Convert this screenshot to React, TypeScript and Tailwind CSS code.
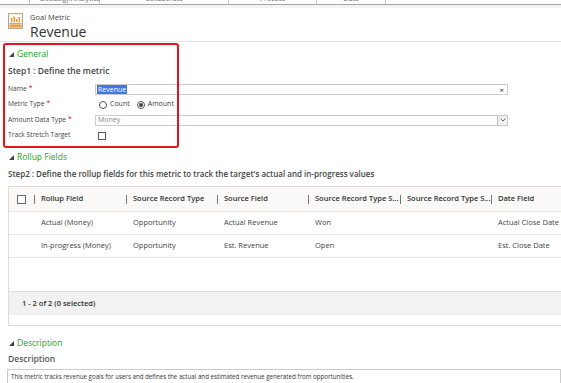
import React from "react";

const font = { fontFamily: '"Open Sans", "Noto Sans", sans-serif' };

function Tri() {
  return (
    <svg width="5" height="5" viewBox="0 0 5 5" className="mr-[3px]">
      <polygon points="5,0 5,5 0,5" fill="#444" />
    </svg>
  );
}

function SectionTitle({ children }: { children: React.ReactNode }) {
  return (
    <div className="flex items-center pl-[9px] text-[8.5px] text-[#21a621] leading-none">
      <Tri />
      <span>{children}</span>
    </div>
  );
}

function Req() {
  return <span className="text-[#e00] ml-[2px]">*</span>;
}

function GoalIcon() {
  return (
    <svg width="15" height="16" viewBox="0 0 15 16">
      <rect x="0.5" y="0.5" width="14" height="15" fill="#f6ecdc" stroke="#b9a58a" />
      <rect x="1.5" y="1.5" width="12" height="8" fill="#fffaf2" />
      <rect x="3" y="5" width="1.5" height="4" fill="#e39b4a" />
      <rect x="5.5" y="3.5" width="1.5" height="5.5" fill="#e39b4a" />
      <rect x="8" y="6" width="1.5" height="3" fill="#e39b4a" />
      <rect x="10.5" y="4" width="1.5" height="5" fill="#e39b4a" />
      <rect x="1.5" y="10" width="12" height="4.5" fill="#f0a04b" />
      <line x1="2" y1="11.5" x2="13" y2="11.5" stroke="#fff" strokeWidth="0.6" strokeDasharray="1 1" />
    </svg>
  );
}

const cols = [
  { w: 25, label: "" },
  { w: 92, label: "Rollup Field" },
  { w: 91, label: "Source Record Type" },
  { w: 91, label: "Source Field" },
  { w: 92, label: "Source Record Type S..." },
  { w: 91, label: "Source Record Type S..." },
  { w: 80, label: "Date Field" },
];

const rows = [
  ["Actual (Money)", "Opportunity", "Actual Revenue", "Won", "", "Actual Close Date"],
  ["In-progress (Money)", "Opportunity", "Est. Revenue", "Open", "", "Est. Close Date"],
];

export default function App() {
  return (
    <div style={font} className="relative w-[561px] h-[383px] overflow-hidden bg-white text-[#333]">
      {/* top nav strip (cut off) */}
      <div className="h-[4px] overflow-hidden flex text-[7px] text-[#666] leading-[8px]">
        <div className="w-[30px] border-r border-[#ccc]" />
        <div className="w-[38px] border-r border-[#ccc] pl-[10px] -mt-[5px]">DocuSign</div>
        <div className="w-[32px] border-r border-[#ccc] pl-[3px] -mt-[5px]">Analytics</div>
        <div className="w-[129px] border-r border-[#ccc] flex justify-center -mt-[5px]">Collaborate</div>
        <div className="w-[88px] border-r border-[#ccc] flex justify-center -mt-[5px]">Process</div>
        <div className="w-[69px] border-r border-[#ccc] flex justify-center -mt-[5px]">Data</div>
      </div>
      <div className="h-[1px] bg-[#a6a6a6]" />
      <div className="h-[3px] bg-[#f3f3f3]" />

      {/* header */}
      <div className="h-[34px] flex border-b border-[#e2e2e2] pl-[8px] pt-[5px]">
        <GoalIcon />
        <div className="ml-[7px] flex flex-col">
          <div className="text-[7.5px] leading-[9px] text-[#444]">Goal Metric</div>
          <div className="text-[14px] leading-[18px] text-[#333] mt-[1px]">Revenue</div>
        </div>
      </div>

      {/* General */}
      <div className="pt-[6px]">
        <div className="h-[12px] flex items-center">
          <SectionTitle>General</SectionTitle>
        </div>
        <div className="h-[22px] flex items-center pl-[8px] text-[8.5px] font-semibold text-[#444]">
          Step1 : Define the metric
        </div>
        <div className="flex flex-col pl-[8px] text-[6.7px] text-[#444]">
          <div className="h-[15px] flex items-center">
            <div className="w-[87px]">Name<Req /></div>
            <div className="w-[413px] h-[11px] border border-[#ccc] flex items-center pl-[1px] pr-[3px] justify-between text-[7px]">
              <span className="bg-[#3d7ae0] text-white px-[1px] leading-[9px]">Revenue</span>
              <span className="text-[8px] text-[#222] leading-none">×</span>
            </div>
          </div>
          <div className="h-[15px] flex items-center">
            <div className="w-[87px]">Metric Type<Req /></div>
            <div className="flex items-center pl-[4px] text-[7px]">
              <span className="w-[8px] h-[8px] rounded-full border border-[#555] bg-white" />
              <span className="ml-[3px]">Count</span>
              <span className="ml-[7px] w-[8px] h-[8px] rounded-full border border-[#555] bg-white flex items-center justify-center">
                <span className="w-[4px] h-[4px] rounded-full bg-[#444]" />
              </span>
              <span className="ml-[3px]">Amount</span>
            </div>
          </div>
          <div className="h-[16px] flex items-center">
            <div className="w-[87px]">Amount Data Type<Req /></div>
            <div className="w-[413px] h-[11px] border border-[#ccc] flex items-center justify-between pl-[2px] text-[7px]">
              <span className="text-[#888]">Money</span>
              <span className="w-[10px] h-[9px] border-l border-[#bbb] bg-[#f0f0f0] flex items-center justify-center">
                <svg width="6" height="4" viewBox="0 0 6 4"><polyline points="0.5,0.5 3,3 5.5,0.5" fill="none" stroke="#555" strokeWidth="0.9" /></svg>
              </span>
            </div>
          </div>
          <div className="h-[15px] flex items-center">
            <div className="w-[90px]">Track Stretch Target</div>
            <span className="w-[8px] h-[8px] border border-[#555] bg-white" />
          </div>
        </div>
      </div>

      {/* Rollup Fields */}
      <div className="mt-[8px] h-[12px] flex items-center">
        <SectionTitle>Rollup Fields</SectionTitle>
      </div>
      <div className="h-[21px] flex items-center pl-[8px] text-[8px] font-semibold text-[#444] whitespace-nowrap">
        Step2 : Define the rollup fields for this metric to track the target's actual and in-progress values
      </div>

      {/* table */}
      <div className="ml-[8px] mt-[2px] w-[570px] h-[140px] border border-[#dcdcdc] flex flex-col text-[7.5px] text-[#444]">
        <div className="h-[25px] bg-[#faf9f7] flex items-center border-b border-[#e6e6e6] font-semibold text-[#333]">
          {cols.map((c, i) => (
            <div key={i} style={{ width: c.w }} className="flex items-center h-full shrink-0 whitespace-nowrap">
              {i === 0 ? (
                <span className="ml-[8px] w-[9px] h-[9px] border border-[#666] bg-white" />
              ) : (
                <>
                  <span className="w-[1px] h-[9px] bg-[#777]" />
                  <span className="ml-[6px]">{c.label}</span>
                </>
              )}
            </div>
          ))}
        </div>
        {rows.map((r, ri) => (
          <div key={ri} className="h-[23px] flex items-center border-b border-[#e6e6e6]">
            <div style={{ width: 25 }} className="shrink-0" />
            {r.map((cell, ci) => (
              <div key={ci} style={{ width: cols[ci + 1].w }} className="shrink-0 pl-[7px] whitespace-nowrap">
                {cell}
              </div>
            ))}
          </div>
        ))}
        <div className="flex-1" />
        <div className="h-[24px] bg-[#f2f2f2] border-t border-[#dedede] flex items-center pl-[13px] font-semibold text-[#333]">
          1 - 2 of 2 (0 selected)
        </div>
        <div className="h-[10px]" />
      </div>

      {/* Description */}
      <div className="mt-[11px] h-[12px] flex items-center">
        <SectionTitle>Description</SectionTitle>
      </div>
      <div className="h-[20px] flex items-center pl-[8px] text-[8.5px] font-semibold text-[#555]">
        Description
      </div>
      <div className="ml-[7px] h-[20px] border border-[#ccc] text-[6.2px] text-[#333] pl-[3px] pt-[2px] whitespace-nowrap">
        This metric tracks revenue goals for users and defines the actual and estimated revenue generated from opportunities.
      </div>

      {/* red annotation box */}
      <div className="absolute left-[3px] top-[43px] w-[176px] h-[105px] border-2 border-[#e8141b] rounded-[3px] pointer-events-none" />
    </div>
  );
}
